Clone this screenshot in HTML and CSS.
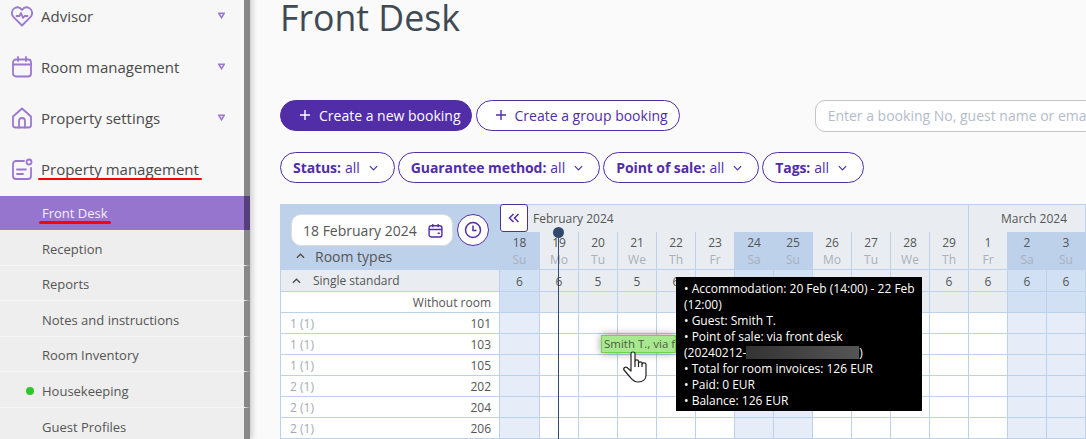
FILE: index.html
```html
<!DOCTYPE html>
<html lang="en">
<head>
  <meta charset="UTF-8" />
  <title>Front Desk</title>
  <link rel="stylesheet" href="styles.css">
</head>
<body>
  <!-- Sidebar -->
  <aside class="sidebar">
    <div class="nav-item">
      <svg class="nav-icon" viewBox="0 0 22 22"><path d="M11 20.500 2.600 12.200C-.2 9.300.6 4.600 3.800 3 6.500 1.700 9.300 2.500 11 5c1.700-2.500 4.500-3.300 7.200-2 3.200 1.600 4 6.300 1.200 9.200z"/><path d="M5.500 11h3l1.500-3 2 5 1.500-2h3"/></svg>
      <span>Advisor</span>
      <svg class="nav-caret" viewBox="0 0 8 8"><path d="M1 1.500h6L4 6.500z"/></svg>
    </div>
    <div class="nav-item">
      <svg class="nav-icon" viewBox="0 0 22 22"><rect x="2" y="3.500" width="18" height="17" rx="3"/><path d="M2 8.500h18M7 1v4M15 1v4"/></svg>
      <span>Room management</span>
      <svg class="nav-caret" viewBox="0 0 8 8"><path d="M1 1.500h6L4 6.500z"/></svg>
    </div>
    <div class="nav-item">
      <svg class="nav-icon" viewBox="0 0 22 22"><path d="M2 9.500 11 1.500l9 8V18a2.500 2.500 0 0 1-2.500 2.500h-13A2.500 2.500 0 0 1 2 18z"/><path d="M8 20.500V14a3 3 0 0 1 6 0v6.500"/></svg>
      <span>Property settings</span>
      <svg class="nav-caret" viewBox="0 0 8 8"><path d="M1 1.500h6L4 6.500z"/></svg>
    </div>
    <div class="nav-item">
      <svg class="nav-icon" viewBox="0 0 22 22"><path d="M13 3H5a3 3 0 0 0-3 3v12a3 3 0 0 0 3 3h12a3 3 0 0 0 3-3V10"/><circle cx="18" cy="4" r="2.500"/><path d="M6 11.500h9M6 16h6"/></svg>
      <span class="marked">Property management</span>
    </div>
    <div class="sub-item active"><span class="marked">Front Desk</span></div>
    <div class="sub-item">Reception</div>
    <div class="sub-item">Reports</div>
    <div class="sub-item">Notes and instructions</div>
    <div class="sub-item">Room Inventory</div>
    <div class="sub-item"><i class="dot"></i>Housekeeping</div>
    <div class="sub-item">Guest Profiles</div>
  </aside>

  <main class="content">
    <h1>Front Desk</h1>

    <div class="actions">
      <button class="pill primary"><svg class="plus" viewBox="0 0 12 12"><path d="M6 1v10M1 6h10"/></svg>Create a new booking</button>
      <button class="pill"><svg class="plus" viewBox="0 0 12 12"><path d="M6 1v10M1 6h10"/></svg>Create a group booking</button>
      <div class="search">Enter a booking No, guest name or email</div>
    </div>

    <div class="filters">
      <button class="pill filter"><b>Status:</b> all<svg class="chev" viewBox="0 0 10 6"><path d="M1 1l4 4 4-4"/></svg></button>
      <button class="pill filter"><b>Guarantee method:</b> all<svg class="chev" viewBox="0 0 10 6"><path d="M1 1l4 4 4-4"/></svg></button>
      <button class="pill filter"><b>Point of sale:</b> all<svg class="chev" viewBox="0 0 10 6"><path d="M1 1l4 4 4-4"/></svg></button>
      <button class="pill filter"><b>Tags:</b> all<svg class="chev" viewBox="0 0 10 6"><path d="M1 1l4 4 4-4"/></svg></button>
    </div>

    <!-- Calendar -->
    <div class="calendar">
      <div class="cal-head">
        <div class="corner">
          <div class="corner-top">
            <div class="date-input">18 February 2024
              <svg viewBox="0 0 14 14"><rect x="1" y="2.500" width="12" height="10.500" rx="2"/><path d="M1 6h12M4.500 1v3M9.500 1v3M9 9.500h2"/></svg>
            </div>
            <button class="clock"><svg viewBox="0 0 18 18"><circle cx="9" cy="9" r="7.500"/><path d="M9 4.500V9.500h3.500"/></svg></button>
          </div>
          <div class="corner-title"><svg class="chev-up" viewBox="0 0 10 6"><path d="M1 5l4-4 4 4"/></svg>Room types</div>
        </div>
        <div class="month feb">
          <button class="prev"><svg viewBox="0 0 12 10"><path d="M5.500 1 1.500 5l4 4M10.500 1l-4 4 4 4"/></svg></button>
          February 2024
        </div>
        <div class="month mar">March 2024</div>
        <div class="day we">18<small>Su</small></div>
        <div class="day">19<small>Mo</small></div>
        <div class="day">20<small>Tu</small></div>
        <div class="day">21<small>We</small></div>
        <div class="day">22<small>Th</small></div>
        <div class="day">23<small>Fr</small></div>
        <div class="day we">24<small>Sa</small></div>
        <div class="day we">25<small>Su</small></div>
        <div class="day">26<small>Mo</small></div>
        <div class="day">27<small>Tu</small></div>
        <div class="day">28<small>We</small></div>
        <div class="day">29<small>Th</small></div>
        <div class="day">1<small>Fr</small></div>
        <div class="day we">2<small>Sa</small></div>
        <div class="day we">3<small>Su</small></div>
      </div>

      <div class="cal-row summary type-row">
        <div class="row-head"><svg class="chev-up" viewBox="0 0 10 6"><path d="M1 5l4-4 4 4"/></svg>Single standard</div>
        <i>6</i><i>6</i><i>5</i><i>5</i><i>6</i><i>6</i><i>6</i><i>6</i><i>6</i><i>6</i><i>6</i><i>6</i><i>6</i><i>6</i><i>6</i>
      </div>
      <div class="cal-row summary">
        <div class="row-head no-room">Without room</div>
        <i></i><i></i><i></i><i></i><i></i><i></i><i></i><i></i><i></i><i></i><i></i><i></i><i></i><i></i><i></i>
      </div>
      <div class="cal-row">
        <div class="row-head"><em>1 (1)</em>101</div>
        <i></i><i></i><i></i><i></i><i></i><i></i><i></i><i></i><i></i><i></i><i></i><i></i><i></i><i></i><i></i>
      </div>
      <div class="cal-row">
        <div class="row-head"><em>1 (1)</em>103</div>
        <i></i><i></i><i></i><i></i><i></i><i></i><i></i><i></i><i></i><i></i><i></i><i></i><i></i><i></i><i></i>
      </div>
      <div class="cal-row">
        <div class="row-head"><em>1 (1)</em>105</div>
        <i></i><i></i><i></i><i></i><i></i><i></i><i></i><i></i><i></i><i></i><i></i><i></i><i></i><i></i><i></i>
      </div>
      <div class="cal-row">
        <div class="row-head"><em>2 (1)</em>202</div>
        <i></i><i></i><i></i><i></i><i></i><i></i><i></i><i></i><i></i><i></i><i></i><i></i><i></i><i></i><i></i>
      </div>
      <div class="cal-row">
        <div class="row-head"><em>2 (1)</em>204</div>
        <i></i><i></i><i></i><i></i><i></i><i></i><i></i><i></i><i></i><i></i><i></i><i></i><i></i><i></i><i></i>
      </div>
      <div class="cal-row">
        <div class="row-head"><em>2 (1)</em>206</div>
        <i></i><i></i><i></i><i></i><i></i><i></i><i></i><i></i><i></i><i></i><i></i><i></i><i></i><i></i><i></i>
      </div>

      <!-- Things lying over the grid -->
      <div class="today"></div>
      <div class="booking">Smith T., via front desk</div>
      <svg class="hand" viewBox="0 0 26 33"><path d="M8 3.500C8 1.500 12 1.500 12 3.500V11C12 9.500 15.500 9.500 15.500 11V13C15.500 11.500 19 11.500 19 13V14C19 12.500 23 12.500 23 14.500V25C23 29 20 32 15 32C11 32 9.500 30 7 27L1 20C0 18.500 2 16.500 4 17.500L8 21Z"/><path d="M12 11V17M15.500 13V17M19 14V17"/></svg>
      <div class="tooltip">
        • Accommodation: 20 Feb (14:00) - 22 Feb (12:00)<br>
        • Guest: Smith T.<br>
        • Point of sale: via front desk<br>
        (20240212-<span class="redacted"></span>)<br>
        • Total for room invoices: 126 EUR<br>
        • Paid: 0 EUR<br>
        • Balance: 126 EUR
      </div>
    </div>
  </main>
</body>
</html>
```

FILE: styles.css
```css
:root {
  --purple: #512da8;
  --line: #bed1ea;
  --head-bg: #e9edf1;
  --weekend: #e6edf8;
  --weekend-head: #d2e0f3;
  --cols: 220px 40px repeat(14, 39px);
}

* {
  box-sizing: border-box;
}

html, body {
  height: 100%;
}

body {
  margin: 0;
  display: flex;
  overflow: hidden;
  background: #fafafa;
  font-family: "Open Sans", "Liberation Sans", sans-serif;
  color: #4a4a4a;
}

button {
  font-family: inherit;
}

/* Sidebar */
.sidebar {
  flex: 0 0 250px;
  margin-top: -8px;
  background: #f7f7f7;
  box-shadow: 2px 0 6px rgba(0, 0, 0, 0.2);
  z-index: 2;
}

.nav-item {
  height: 51px;
  display: flex;
  align-items: center;
  padding: 0 0 4px 11px;
  border-right: 6px solid #888;
  font-size: 15px;
}

.nav-icon {
  width: 22px;
  height: 22px;
  margin-right: 8px;
  fill: none;
  stroke: #9b78d0;
  stroke-width: 1.8;
  stroke-linejoin: round;
  stroke-linecap: round;
}

.nav-caret {
  width: 7px;
  height: 7px;
  margin-left: auto;
  margin-right: 19px;
  fill: none;
  stroke: #9b78d0;
  stroke-width: 1.8;
}

.marked {
  position: relative;
}

.marked::after {
  content: "";
  position: absolute;
  left: -3px;
  right: -3px;
  bottom: -1.500px;
  height: 2.500px;
  border-radius: 2px;
  background: #f00;
}

.sub-item {
  position: relative;
  height: 35.600px;
  display: flex;
  align-items: center;
  padding: 2.500px 0 0 42px;
  background: #eee;
  border-right: 6px solid #888;
  border-bottom: 1px solid #f6f6f6;
  font-size: 13px;
  color: #555;
}

.sub-item.active {
  height: 34px;
  padding-top: 0;
  background: #9575cd;
  border-right-color: #553f7a;
  border-bottom: 0;
  color: #f5f0fb;
}

.dot {
  position: absolute;
  left: 26px;
  width: 8px;
  height: 8px;
  border-radius: 50%;
  background: #2fc52f;
}

/* Main area */
.content {
  flex: 1;
  min-width: 0;
  padding-left: 30px;
}

h1 {
  margin: 0;
  height: 100px;
  font-size: 35.700px;
  font-weight: 400;
  line-height: 34px;
  color: #3f4a55;
}

.actions, .filters {
  display: flex;
  gap: 4px;
  white-space: nowrap;
}

.filters {
  gap: 3px;
  margin-top: 20px;
}

.pill {
  height: 31px;
  display: flex;
  align-items: center;
  padding: 0 11px 1px 18px;
  background: #fff;
  border: 1px solid var(--purple);
  border-radius: 16px;
  font-size: 14px;
  color: var(--purple);
}

.pill.primary {
  padding-right: 10px;
  background: var(--purple);
  color: #fff;
}

.plus {
  width: 12px;
  height: 12px;
  margin-right: 8px;
  fill: none;
  stroke: currentColor;
  stroke-width: 1.400;
}

.filter {
  padding: 0 16px 0 12px;
}

.filter b {
  font-weight: 700;
  letter-spacing: -0.080px;
  margin-right: 4px;
}

.chev {
  width: 9px;
  height: 6px;
  margin-left: 9px;
  fill: none;
  stroke: currentColor;
  stroke-width: 1.300;
}

.search {
  height: 32px;
  width: 300px;
  margin-left: 131px;
  padding-left: 12px;
  border: 1px solid #c4c4c4;
  border-radius: 10px;
  background: #fff;
  font-size: 14px;
  line-height: 30px;
  color: #b4bccb;
}

/* Calendar */
.calendar {
  position: relative;
  width: 806px;
  margin-top: 21px;
  font-size: 12px;
  color: #555;
}

.cal-head {
  display: grid;
  grid-template-columns: var(--cols);
  grid-template-rows: 28px 38px;
}

.corner {
  grid-row: span 2;
  padding: 10px 0 0 11px;
  background: var(--line);
  border-right: 1px solid var(--line);
}

.corner-top {
  display: flex;
  gap: 4px;
}

.date-input {
  width: 162px;
  height: 32px;
  display: flex;
  align-items: center;
  justify-content: space-between;
  padding: 0 9px 0 11px;
  background: #fff;
  border: 1px solid #ddd;
  border-radius: 10px;
  font-size: 14px;
}

.date-input svg {
  width: 15px;
  height: 15px;
  fill: none;
  stroke: var(--purple);
  stroke-width: 1.300;
}

.clock {
  width: 32px;
  height: 32px;
  padding: 6px;
  background: #fff;
  border: 1px solid var(--purple);
  border-radius: 50%;
}

.clock svg {
  display: block;
  width: 18px;
  height: 18px;
  fill: none;
  stroke: var(--purple);
  stroke-width: 1.500;
}

.corner-title {
  display: flex;
  align-items: center;
  height: 20px;
  padding-left: 5px;
  font-size: 14px;
}

.chev-up {
  width: 9px;
  height: 6px;
  margin-right: 10px;
  fill: none;
  stroke: #4a4a4a;
  stroke-width: 1.400;
}

.month {
  display: flex;
  align-items: center;
  background: var(--head-bg);
  border-top: 1px solid var(--line);
  border-right: 1px solid var(--line);
}

.feb {
  grid-column: span 12;
}

.mar {
  grid-column: span 3;
  justify-content: center;
  padding-left: 14px;
}

.prev {
  width: 28px;
  height: 28px;
  margin: -1px 5px 0 0;
  padding: 0;
  background: #fff;
  border: 1px solid var(--purple);
  border-radius: 3px;
}

.prev svg {
  display: block;
  width: 12px;
  height: 10px;
  margin: 0 auto;
  fill: none;
  stroke: var(--purple);
  stroke-width: 1.500;
}

.day {
  padding-top: 2px;
  text-align: center;
  line-height: 17px;
  background: var(--head-bg);
  border-right: 1px solid var(--line);
  border-bottom: 1px solid var(--line);
}

.day small {
  display: block;
  font-size: 12px;
  color: #a9b0ba;
}

.day.we {
  background: var(--line);
  border-right-color: var(--line);
}

.cal-row {
  display: grid;
  grid-template-columns: var(--cols);
  height: 21px;
}

.type-row {
  height: 22px;
}

.cal-row i {
  display: flex;
  align-items: center;
  justify-content: center;
  font-style: normal;
  background: #fff;
  border-right: 1px solid var(--line);
  border-bottom: 1px solid var(--line);
}

.cal-row i:nth-child(2),
.cal-row i:nth-child(8),
.cal-row i:nth-child(9),
.cal-row i:nth-child(15),
.cal-row i:nth-child(16) {
  background: var(--weekend);
}

.summary i {
  padding-top: 1px;
  background: var(--head-bg);
}

.summary i:nth-child(2),
.summary i:nth-child(8),
.summary i:nth-child(9),
.summary i:nth-child(15),
.summary i:nth-child(16) {
  background: var(--weekend-head);
}

.row-head {
  display: flex;
  align-items: center;
  justify-content: space-between;
  padding: 0 8px 0 9px;
  background: #fff;
  border-left: 1px solid var(--line);
  border-right: 1px solid var(--line);
  border-bottom: 1px solid var(--line);
  font-size: 12px;
}

.row-head em {
  font-style: normal;
  color: #a3aab5;
}

.type-row .row-head {
  justify-content: flex-start;
  padding-left: 11px;
  background: var(--head-bg);
}

.type-row .chev-up {
  margin-right: 12px;
}

.no-room {
  justify-content: flex-end;
}

.today {
  position: absolute;
  left: 278px;
  top: 28px;
  bottom: 0;
  width: 1px;
  background: #2f4a6d;
}

.today::before {
  content: "";
  position: absolute;
  left: -5px;
  top: -5px;
  width: 11px;
  height: 11px;
  border-radius: 50%;
  background: #2f4a6d;
}

.booking {
  position: absolute;
  left: 321px;
  top: 131px;
  width: 75px;
  height: 18px;
  padding-left: 2px;
  overflow: hidden;
  white-space: nowrap;
  background: #a8e88e;
  border: 1px solid #6fd34a;
  box-shadow: 0 0 8px rgba(0, 0, 0, 0.4);
  font-size: 11.500px;
  line-height: 16px;
  color: #4f5a48;
}

.hand {
  position: absolute;
  left: 343px;
  top: 146px;
  width: 26px;
  height: 33px;
  fill: #fff;
  stroke: #222;
  stroke-width: 1.200;
  stroke-linejoin: round;
}

.tooltip {
  position: absolute;
  left: 396px;
  top: 73px;
  width: 246px;
  height: 134px;
  padding: 4px 4px 3px 8px;
  background: #000;
  font-size: 12px;
  line-height: 16px;
  color: #fff;
}

.redacted {
  display: inline-block;
  width: 113px;
  height: 13px;
  vertical-align: -2px;
  background: linear-gradient(90deg, #333, #555);
}
```
